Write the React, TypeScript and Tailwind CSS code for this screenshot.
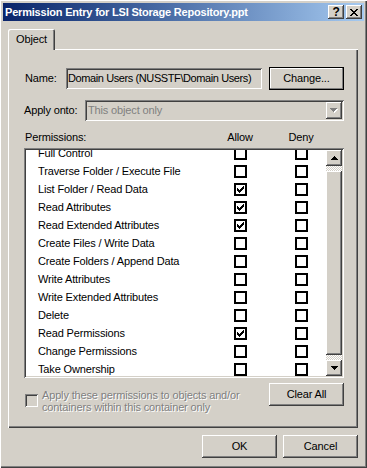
import React from 'react';

const raised =
  'bg-[#d4d0c8] shadow-[inset_-1px_-1px_#404040,inset_1px_1px_#fff,inset_-2px_-2px_#808080,inset_2px_2px_#d4d0c8]';
const sunken =
  'shadow-[inset_1px_1px_#808080,inset_-1px_-1px_#fff,inset_2px_2px_#404040,inset_-2px_-2px_#d4d0c8]';
const defaultBtn =
  'bg-[#d4d0c8] shadow-[inset_0_0_0_1px_#000,inset_-2px_-2px_#808080,inset_2px_2px_#fff]';
const disabledText = 'text-[#808080] [text-shadow:1px_1px_0_#fff]';

const permissions: { label: string; allow: boolean }[] = [
  { label: 'Full Control', allow: false },
  { label: 'Traverse Folder / Execute File', allow: false },
  { label: 'List Folder / Read Data', allow: true },
  { label: 'Read Attributes', allow: true },
  { label: 'Read Extended Attributes', allow: true },
  { label: 'Create Files / Write Data', allow: false },
  { label: 'Create Folders / Append Data', allow: false },
  { label: 'Write Attributes', allow: false },
  { label: 'Write Extended Attributes', allow: false },
  { label: 'Delete', allow: false },
  { label: 'Read Permissions', allow: true },
  { label: 'Change Permissions', allow: false },
  { label: 'Take Ownership', allow: false },
];

function CheckMark() {
  // classic 7x7 pixel tick
  return (
    <svg width="7" height="7" viewBox="0 0 7 7" shapeRendering="crispEdges" fill="#000">
      <rect x="6" y="0" width="1" height="1" />
      <rect x="5" y="1" width="2" height="1" />
      <rect x="0" y="2" width="1" height="1" />
      <rect x="4" y="2" width="3" height="1" />
      <rect x="0" y="3" width="2" height="1" />
      <rect x="3" y="3" width="3" height="1" />
      <rect x="0" y="4" width="5" height="1" />
      <rect x="1" y="5" width="3" height="1" />
      <rect x="2" y="6" width="1" height="1" />
    </svg>
  );
}

function ListCheck({ checked, className = '' }: { checked: boolean; className?: string }) {
  return (
    <div className={`w-[13px] h-[13px] border-2 border-black bg-white flex items-center justify-center shrink-0 ${className}`}>
      {checked && <CheckMark />}
    </div>
  );
}

function Arrow({ dir, color = '#000' }: { dir: 'up' | 'down'; color?: string }) {
  const rows = dir === 'up' ? [3, 2, 1, 0] : [0, 1, 2, 3];
  return (
    <svg width="7" height="4" viewBox="0 0 7 4" shapeRendering="crispEdges" fill={color}>
      {rows.map((inset, y) => (
        <rect key={y} x={inset} y={y} width={7 - inset * 2} height="1" />
      ))}
    </svg>
  );
}

function Button({ children, isDefault }: { children: React.ReactNode; isDefault?: boolean }) {
  return (
    <div
      className={`w-[75px] h-[23px] shrink-0 flex items-center justify-center leading-[13px] ${
        isDefault ? defaultBtn : raised
      }`}
    >
      {children}
    </div>
  );
}

export default function App() {
  return (
    <div className="w-[367px] h-[468px] bg-[#d4d0c8] p-[3px] flex flex-col text-[11px] leading-[13px] tracking-[-0.15px] text-black font-['Liberation_Sans',Arial,sans-serif] shadow-[inset_1px_1px_#fff,inset_-1px_-1px_#404040,inset_-2px_-2px_#808080]">
      {/* Title bar */}
      <div className="h-[18px] shrink-0 flex items-center pl-[2px] pr-[2px] bg-linear-to-r from-[#0a246a] to-[#a6caf0]">
        <span className="flex-1 font-bold text-white whitespace-nowrap tracking-[-0.2px]">Permission Entry for LSI Storage Repository.ppt</span>
        <div className={`w-[16px] h-[14px] flex items-center justify-center font-bold text-[12px] leading-none ${raised}`}>
          ?
        </div>
        <div className={`w-[16px] h-[14px] ml-[2px] flex items-center justify-center ${raised}`}>
          <svg width="8" height="7" viewBox="0 0 8 7" shapeRendering="crispEdges" fill="#000">
            <rect x="0" y="0" width="2" height="1" />
            <rect x="6" y="0" width="2" height="1" />
            <rect x="1" y="1" width="2" height="1" />
            <rect x="5" y="1" width="2" height="1" />
            <rect x="2" y="2" width="4" height="1" />
            <rect x="3" y="3" width="2" height="1" />
            <rect x="2" y="4" width="4" height="1" />
            <rect x="1" y="5" width="2" height="1" />
            <rect x="5" y="5" width="2" height="1" />
            <rect x="0" y="6" width="2" height="1" />
            <rect x="6" y="6" width="2" height="1" />
          </svg>
        </div>
      </div>

      {/* Body */}
      <div className="flex-1 flex flex-col pl-[5px] pr-[6px] pt-[8px]">
        {/* Tab */}
        <div className="relative z-10 w-[47px] h-[21px] -mb-[1px] bg-[#d4d0c8] rounded-t-[2px] flex items-center justify-center pb-[1px] shadow-[inset_1px_1px_#fff,inset_-1px_0_#404040,inset_-2px_0_#808080]">
          Object
        </div>

        {/* Panel */}
        <div className="h-[379px] flex flex-col pt-[18px] pl-[16px] pr-[14px] shadow-[inset_1px_1px_#fff,inset_-1px_-1px_#404040,inset_-2px_-2px_#808080]">
          {/* Name */}
          <div className="h-[23px] flex items-center">
            <span className="w-[42px] shrink-0 pl-[1px]">Name:</span>
            <div className={`flex-1 h-[21px] flex items-center pl-[2px] whitespace-nowrap overflow-hidden tracking-[-0.4px] ${sunken}`}>
              Domain Users (NUSSTF\Domain Users)
            </div>
            <div className="ml-[7px]">
              <Button isDefault>Change...</Button>
            </div>
          </div>

          {/* Apply onto */}
          <div className="mt-[10px] h-[21px] flex items-center">
            <span className="w-[61px] shrink-0">Apply onto:</span>
            <div className={`flex-1 h-[21px] flex items-center pl-[3px] pr-[2px] ${sunken}`}>
              <span className="flex-1 text-[#808080]">This object only</span>
              <div className={`w-[16px] h-[17px] flex items-center justify-center ${raised}`}>
                <div className="relative w-[8px] h-[5px]">
                  <div className="absolute left-[1px] top-[1px]">
                    <Arrow dir="down" color="#fff" />
                  </div>
                  <div className="absolute left-0 top-0">
                    <Arrow dir="down" color="#808080" />
                  </div>
                </div>
              </div>
            </div>
          </div>

          {/* Header */}
          <div className="mt-[10px] h-[13px] flex">
            <span className="w-[192px] pl-[1px]">Permissions:</span>
            <span className="w-[48px] text-center">Allow</span>
            <span className="w-[74px] text-center">Deny</span>
          </div>

          {/* List */}
          <div className={`mt-[4px] h-[230px] bg-white p-[2px] flex ${sunken}`}>
            <div className="flex-1 overflow-hidden">
              <div className="-mt-[6px]">
                {permissions.map((p) => (
                  <div key={p.label} className="h-[18px] flex items-center">
                    <span className="w-[208px] pl-[12px] whitespace-nowrap">{p.label}</span>
                    <ListCheck checked={p.allow} />
                    <ListCheck checked={false} className="ml-[48px]" />
                  </div>
                ))}
              </div>
            </div>
            <div className="w-[16px] flex flex-col">
              <div className={`h-[16px] flex items-center justify-center ${raised}`}>
                <Arrow dir="up" />
              </div>
              <div className="h-[5px] bg-[repeating-conic-gradient(#fff_0_25%,#d4d0c8_0_50%)] bg-[length:2px_2px]" />
              <div className={`h-[184px] ${raised}`} />
              <div className="flex-1 bg-[repeating-conic-gradient(#fff_0_25%,#d4d0c8_0_50%)] bg-[length:2px_2px]" />
              <div className={`h-[16px] flex items-center justify-center ${raised}`}>
                <Arrow dir="down" />
              </div>
            </div>
          </div>

          {/* Bottom row */}
          <div className="mt-[5px] flex">
            <div className="flex items-start">
              <div className={`ml-[1px] mt-[11px] w-[13px] h-[13px] shrink-0 bg-[#d4d0c8] ${sunken}`} />
              <div className={`ml-[4px] mt-[6px] leading-[12px] ${disabledText}`}>
                Apply these permissions to objects and/or
                <br />
                containers within this container only
              </div>
            </div>
            <div className="ml-auto">
              <Button>Clear All</Button>
            </div>
          </div>
        </div>

        {/* Dialog buttons */}
        <div className="mt-[7px] flex justify-end gap-[6px]">
          <Button>OK</Button>
          <Button>Cancel</Button>
        </div>
      </div>
    </div>
  );
}
